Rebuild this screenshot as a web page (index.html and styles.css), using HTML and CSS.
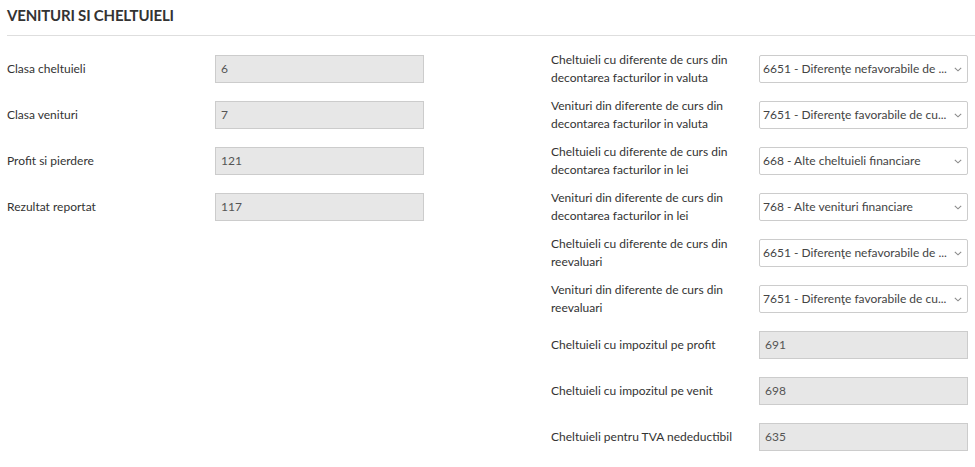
FILE: index.html
```html
<!DOCTYPE html>
<html lang="ro">
<head>
<meta charset="utf-8">
<title>Venituri si cheltuieli</title>
<link rel="stylesheet" href="styles.css">
</head>
<body>
<div class="page">
  <h1 class="title">VENITURI SI CHELTUIELI</h1>
  <div class="divider"></div>
  <div class="form">
    <div class="col">
      <div class="row"><div class="label">Clasa cheltuieli</div><div class="field ro">6</div></div>
      <div class="row"><div class="label">Clasa venituri</div><div class="field ro">7</div></div>
      <div class="row"><div class="label">Profit si pierdere</div><div class="field ro">121</div></div>
      <div class="row"><div class="label">Rezultat reportat</div><div class="field ro">117</div></div>
    </div>
    <div class="col">
      <div class="row"><div class="label">Cheltuieli cu diferente de curs din decontarea facturilor in valuta</div><div class="field sel"><span class="val">6651 - Diferenţe nefavorabile de ...</span><svg class="chev" width="8" height="5" viewBox="0 0 8 5"><polyline points="0.8,0.8 4,3.8 7.2,0.8" fill="none" stroke="#8a8a8a" stroke-width="1.1"/></svg></div></div>
      <div class="row"><div class="label">Venituri din diferente de curs din decontarea facturilor in valuta</div><div class="field sel"><span class="val">7651 - Diferenţe favorabile de cu...</span><svg class="chev" width="8" height="5" viewBox="0 0 8 5"><polyline points="0.8,0.8 4,3.8 7.2,0.8" fill="none" stroke="#8a8a8a" stroke-width="1.1"/></svg></div></div>
      <div class="row"><div class="label">Cheltuieli cu diferente de curs din decontarea facturilor in lei</div><div class="field sel"><span class="val">668 - Alte cheltuieli financiare</span><svg class="chev" width="8" height="5" viewBox="0 0 8 5"><polyline points="0.8,0.8 4,3.8 7.2,0.8" fill="none" stroke="#8a8a8a" stroke-width="1.1"/></svg></div></div>
      <div class="row"><div class="label">Venituri din diferente de curs din decontarea facturilor in lei</div><div class="field sel"><span class="val">768 - Alte venituri financiare</span><svg class="chev" width="8" height="5" viewBox="0 0 8 5"><polyline points="0.8,0.8 4,3.8 7.2,0.8" fill="none" stroke="#8a8a8a" stroke-width="1.1"/></svg></div></div>
      <div class="row"><div class="label">Cheltuieli cu diferente de curs din reevaluari</div><div class="field sel"><span class="val">6651 - Diferenţe nefavorabile de ...</span><svg class="chev" width="8" height="5" viewBox="0 0 8 5"><polyline points="0.8,0.8 4,3.8 7.2,0.8" fill="none" stroke="#8a8a8a" stroke-width="1.1"/></svg></div></div>
      <div class="row"><div class="label">Venituri din diferente de curs din reevaluari</div><div class="field sel"><span class="val">7651 - Diferenţe favorabile de cu...</span><svg class="chev" width="8" height="5" viewBox="0 0 8 5"><polyline points="0.8,0.8 4,3.8 7.2,0.8" fill="none" stroke="#8a8a8a" stroke-width="1.1"/></svg></div></div>
      <div class="row"><div class="label">Cheltuieli cu impozitul pe profit</div><div class="field ro">691</div></div>
      <div class="row"><div class="label">Cheltuieli cu impozitul pe venit</div><div class="field ro">698</div></div>
      <div class="row"><div class="label">Cheltuieli pentru TVA nedeductibil</div><div class="field ro">635</div></div>
    </div>
  </div>
</div>
</body>
</html>
```
FILE: styles.css
```css
html, body {
  margin: 0;
  padding: 0;
  background: #fff;
}
body {
  font-family: Lato, "Open Sans", sans-serif;
  font-size: 12px;
  color: #333;
}
.page {
  padding: 0 0 0 7px;
}
.title {
  margin: 0;
  padding-top: 5px;
  font-size: 15px;
  line-height: 20px;
  font-weight: 700;
  letter-spacing: -0.2px;
  color: #333;
}
.divider {
  margin-top: 10px;
  border-top: 1px solid #dedede;
}
.form {
  display: grid;
  grid-template-columns: 418px 418px;
  column-gap: 126px;
  margin-top: 19px;
}
.col {
  display: flex;
  flex-direction: column;
}
.row {
  display: flex;
  align-items: center;
  height: 28px;
  margin-bottom: 18px;
}
.label {
  flex: none;
  width: 208px;
  padding-right: 20px;
  box-sizing: border-box;
  line-height: 18px;
}
.field {
  flex: none;
  width: 209px;
  height: 28px;
  box-sizing: border-box;
  border: 1px solid #cccccc;
  display: flex;
  align-items: center;
  padding-left: 5px;
  color: #555;
  line-height: 18px;
}
.ro {
  background: #e7e7e7;
}
.sel {
  background: #fff;
  padding-left: 3px;
  padding-right: 5px;
  border-radius: 2px;
}
.val {
  flex: 1;
  min-width: 0;
  white-space: nowrap;
  overflow: hidden;
  padding-right: 4px;
  color: #444;
}
.chev {
  flex: none;
  display: block;
}
```
